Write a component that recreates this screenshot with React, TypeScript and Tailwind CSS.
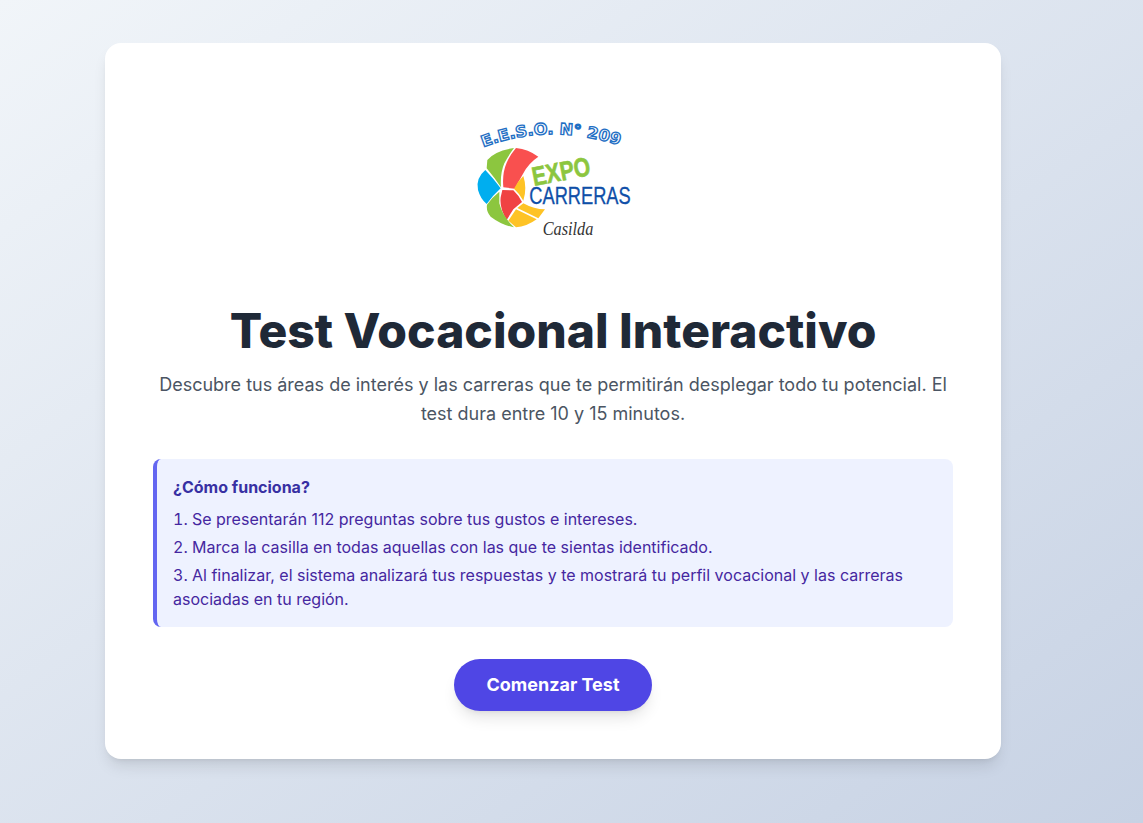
const STEPS = [
  "Se presentarán 112 preguntas sobre tus gustos e intereses.",
  "Marca la casilla en todas aquellas con las que te sientas identificado.",
  "Al finalizar, el sistema analizará tus respuestas y te mostrará tu perfil vocacional y las carreras asociadas en tu región.",
];

// logo redibujado a mano, coordenadas a escala 3x
function Logo() {
  return (
    <svg viewBox="0 0 570 420" className="h-[140px] w-[190px]">
      <defs>
        <path id="arc" d="M70 112 Q 265 36 484 108" fill="none" />
      </defs>
      <text
        fontFamily="'DejaVu Sans', sans-serif"
        fontWeight="700"
        fontSize="47"
        fill="#fff"
        stroke="#1f6fc4"
        strokeWidth="4"
      >
        <textPath href="#arc" textLength="416" lengthAdjust="spacingAndGlyphs">
          E.E.S.O. N° 209
        </textPath>
      </text>
      <path d="M76 180 Q46 205 54 240 Q62 268 80 282 Q100 255 122 235 Q100 205 76 180Z" fill="#00aeef" />
      <path d="M162 114 Q105 122 82 150 L80 175 Q105 205 123 232 Q120 190 133 160 Q146 135 162 114Z" fill="#8cc63f" />
      <path d="M168 114 Q205 118 235 140 Q205 160 190 190 L164 236 L130 232 Q126 190 140 158 Q150 135 168 114Z" fill="#f9504f" />
      <path d="M190 198 Q172 215 162 236 Q178 250 190 272 Q202 235 190 198Z" fill="#fec325" />
      <path d="M127 240 L160 241 Q176 256 186 276 L160 298 L140 330 Q118 295 122 262Z" fill="#f04343" />
      <path d="M118 245 Q96 262 81 284 Q78 305 92 320 Q125 345 162 352 Q128 320 118 280Z" fill="#8cc63f" />
      <path d="M168 298 L145 332 L168 352 Q200 350 230 328Z" fill="#fec325" />
      <path d="M190 280 L172 294 L235 325 L255 298 Q222 298 190 280Z" fill="#fec325" />
      <text
        x="222"
        y="228"
        transform="rotate(-11 222 228)"
        fontFamily="'Liberation Sans', sans-serif"
        fontWeight="700"
        fontSize="80"
        fill="#8cc63f"
        stroke="#8cc63f"
        strokeWidth="2"
        textLength="176"
        lengthAdjust="spacingAndGlyphs"
      >
        EXPO
      </text>
      <text
        x="208"
        y="281"
        fontFamily="'Liberation Sans', sans-serif"
        fontSize="72"
        fill="#0f4fa8"
        stroke="#0f4fa8"
        strokeWidth="1"
        textLength="304"
        lengthAdjust="spacingAndGlyphs"
      >
        CARRERAS
      </text>
      <text
        x="248"
        y="374"
        fontFamily="'Liberation Serif', serif"
        fontStyle="italic"
        fontSize="56"
        fill="#333"
        textLength="152"
        lengthAdjust="spacingAndGlyphs"
      >
        Casilda
      </text>
    </svg>
  );
}

export default function App() {
  return (
    <div className="flex min-h-screen items-center justify-center bg-gradient-to-br from-[#f1f5f9] to-[#c7d2e4] pr-[37px] pb-[21px] font-['Inter',sans-serif]">
      <div className="w-full max-w-4xl rounded-2xl bg-white p-12 text-center shadow-lg">
        <div className="mt-[19px] flex justify-center pl-1">
          <Logo />
        </div>
        <h1 className="mt-[57px] text-5xl font-extrabold text-[#1f2937]">Test Vocacional Interactivo</h1>
        <p className="mt-[15px] text-lg leading-[29px] text-[#4b5563]">
          Descubre tus áreas de interés y las carreras que te permitirán desplegar todo tu potencial. El test dura entre 10 y 15 minutos.
        </p>
        <div className="mt-[31px] rounded-lg border-l-4 border-[#6366f1] bg-[#eef2ff] p-4 text-left">
          <h2 className="mb-2 font-bold text-[#3730a3]">¿Cómo funciona?</h2>
          <ol className="list-inside list-decimal space-y-1 text-base leading-6 text-[#4527a0]">
            {STEPS.map((s) => (
              <li key={s}>{s}</li>
            ))}
          </ol>
        </div>
        <button className="mt-8 rounded-full bg-[#4f46e5] px-8 py-3 text-lg font-bold text-white shadow-lg">
          Comenzar Test
        </button>
      </div>
    </div>
  );
}
